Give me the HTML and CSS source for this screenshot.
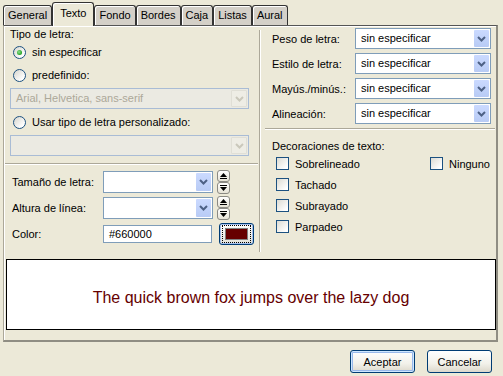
FILE: index.html
```html
<!DOCTYPE html>
<html>
<head>
  <link rel="stylesheet" href="styles.css">
  <title>Texto</title>
</head>
<body>
  <div class="dialog">
    <div class="tabs">
      <div class="tab">General</div>
      <div class="tab active">Texto</div>
      <div class="tab">Fondo</div>
      <div class="tab">Bordes</div>
      <div class="tab">Caja</div>
      <div class="tab">Listas</div>
      <div class="tab">Aural</div>
    </div>

    <div class="panel">
      <div class="cols">
        <div class="col-left">
          <div class="caption">Tipo de letra:</div>
          <div class="radio-row"><span class="radio checked"></span>sin especificar</div>
          <div class="radio-row spaced"><span class="radio"></span>predefinido:</div>
          <div class="select wide disabled">
            <span class="value">Arial, Helvetica, sans-serif</span>
            <span class="drop"><svg width="9" height="6" viewBox="0 0 9 6"><polyline points="1,1 4.5,4.5 8,1" /></svg></span>
          </div>
          <div class="radio-row"><span class="radio"></span>Usar tipo de letra personalizado:</div>
          <div class="select wide disabled">
            <span class="value"></span>
            <span class="drop"><svg width="9" height="6" viewBox="0 0 9 6"><polyline points="1,1 4.5,4.5 8,1" /></svg></span>
          </div>
          <div class="hsep left"></div>

          <div class="field-row first">
            <span class="field-label">Tamaño de letra:</span>
            <div class="select small">
              <span class="value"></span>
              <span class="drop"><svg width="9" height="6" viewBox="0 0 9 6"><polyline points="1,1 4.5,4.5 8,1" /></svg></span>
            </div>
            <div class="spinner">
              <span class="spin"><svg width="7" height="6" viewBox="0 0 7 6"><polygon points="3.5,0 7,4 0,4" /><rect x="0" y="5" width="7" height="1" /></svg></span>
              <span class="spin"><svg width="7" height="6" viewBox="0 0 7 6"><rect x="0" y="0" width="7" height="1" /><polygon points="0,2 7,2 3.5,6" /></svg></span>
            </div>
          </div>
          <div class="field-row">
            <span class="field-label">Altura de línea:</span>
            <div class="select small">
              <span class="value"></span>
              <span class="drop"><svg width="9" height="6" viewBox="0 0 9 6"><polyline points="1,1 4.5,4.5 8,1" /></svg></span>
            </div>
            <div class="spinner">
              <span class="spin"><svg width="7" height="6" viewBox="0 0 7 6"><polygon points="3.5,0 7,4 0,4" /><rect x="0" y="5" width="7" height="1" /></svg></span>
              <span class="spin"><svg width="7" height="6" viewBox="0 0 7 6"><rect x="0" y="0" width="7" height="1" /><polygon points="0,2 7,2 3.5,6" /></svg></span>
            </div>
          </div>
          <div class="field-row">
            <span class="field-label">Color:</span>
            <div class="text-input">#660000</div>
            <div class="color-btn"><span class="focus"><span class="swatch"></span></span></div>
          </div>
        </div>

        <div class="vsep"></div>

        <div class="col-right">
          <div class="prop-row">
            <span class="prop-label">Peso de letra:</span>
            <div class="select prop">
              <span class="value">sin especificar</span>
              <span class="drop"><svg width="9" height="6" viewBox="0 0 9 6"><polyline points="1,1 4.5,4.5 8,1" /></svg></span>
            </div>
          </div>
          <div class="prop-row">
            <span class="prop-label">Estilo de letra:</span>
            <div class="select prop">
              <span class="value">sin especificar</span>
              <span class="drop"><svg width="9" height="6" viewBox="0 0 9 6"><polyline points="1,1 4.5,4.5 8,1" /></svg></span>
            </div>
          </div>
          <div class="prop-row">
            <span class="prop-label">Mayús./minús.:</span>
            <div class="select prop">
              <span class="value">sin especificar</span>
              <span class="drop"><svg width="9" height="6" viewBox="0 0 9 6"><polyline points="1,1 4.5,4.5 8,1" /></svg></span>
            </div>
          </div>
          <div class="prop-row">
            <span class="prop-label">Alineación:</span>
            <div class="select prop">
              <span class="value">sin especificar</span>
              <span class="drop"><svg width="9" height="6" viewBox="0 0 9 6"><polyline points="1,1 4.5,4.5 8,1" /></svg></span>
            </div>
          </div>
          <div class="hsep right"></div>
          <div class="caption deco">Decoraciones de texto:</div>
          <div class="checks">
            <div class="check-row"><span class="checkbox"></span>Sobrelineado</div>
            <div class="check-row"><span class="checkbox"></span>Ninguno</div>
            <div class="check-row"><span class="checkbox"></span>Tachado</div>
            <div></div>
            <div class="check-row"><span class="checkbox"></span>Subrayado</div>
            <div></div>
            <div class="check-row"><span class="checkbox"></span>Parpadeo</div>
          </div>
        </div>
      </div>

      <div class="preview">The quick brown fox jumps over the lazy dog</div>
    </div>

    <div class="footer">
      <button class="btn default">Aceptar</button>
      <button class="btn">Cancelar</button>
    </div>
  </div>
</body>
</html>
```

FILE: styles.css
```css
html, body {
  margin: 0;
  background: #ece9d8;
}

body {
  font-family: "Liberation Sans", Arial, sans-serif;
  font-size: 11px;
  color: #000;
  width: 503px;
  height: 376px;
  overflow: hidden;
}

.dialog {
  padding: 0 5px 0 3px;
}

/* tabs */
.tabs {
  display: flex;
  align-items: flex-end;
  height: 25px;
  position: relative;
  z-index: 1;
}

.tab {
  height: 19px;
  line-height: 19px;
  padding: 0 4px;
  background: #d4d0c8;
  border: 1px solid #333;
  border-bottom: none;
  border-radius: 3px 3px 0 0;
  box-shadow: inset 1px 1px 0 #fff;
  font-size: 11px;
}

.tab.active {
  height: 23px;
  line-height: 20px;
  margin-bottom: -1px;
  background: #ece9d8;
  padding: 0 7px;
}

/* panel */
.panel {
  height: 314px;
  border-top: 1px solid #555;
  border-left: 1px solid #aca899;
  border-right: 2px solid #8f8d83;
  border-bottom: 2px solid #8f8d83;
  box-shadow: inset 1px 1px 0 #fff;
}

.cols {
  display: flex;
  height: 229px;
}

.col-left {
  width: 239px;
  flex-shrink: 0;
  padding: 0 10px 0 6px;
}

.vsep {
  width: 0;
  margin: 4px 0 3px;
  border-left: 1px solid #aca899;
  border-right: 1px solid #fff;
}

.col-right {
  flex: 1;
  padding: 2px 4px 0 11px;
}

.caption {
  height: 17px;
  line-height: 17px;
}

.caption.deco {
  margin-top: 8px;
}

.radio-row {
  display: flex;
  align-items: center;
  height: 18px;
  padding-left: 3px;
}

.radio-row + .select,
.select + .radio-row {
  margin-top: 4px;
}

.radio-row.spaced {
  margin-top: 5px;
}

.radio {
  width: 11px;
  height: 11px;
  border: 1px solid #1c5180;
  border-radius: 50%;
  background: linear-gradient(135deg, #d6d5cd, #fff 80%);
  margin-right: 6px;
  display: flex;
  align-items: center;
  justify-content: center;
}

.radio.checked::after {
  content: "";
  width: 5px;
  height: 5px;
  border-radius: 50%;
  background: radial-gradient(circle at 40% 40%, #8fe28f, #21a121 70%);
}

/* selects */
.select {
  display: flex;
  flex-shrink: 0;
  height: 19px;
  border: 1px solid #7f9db9;
  background: #fff;
}

.select .value {
  flex: 1;
  line-height: 19px;
  padding-left: 5px;
  white-space: nowrap;
  overflow: hidden;
}

.select .drop {
  width: 15px;
  margin: 1px;
  background: linear-gradient(#cbdaff, #b8cbf5);
  border-radius: 1px;
  display: flex;
  align-items: center;
  justify-content: center;
}

.select .drop polyline {
  fill: none;
  stroke: #4d6185;
  stroke-width: 2;
}

.select.disabled {
  border-color: #a9bcd5;
  background: #ebeae2;
}

.select.disabled .value {
  color: #aca899;
}

.select.disabled .drop {
  background: #eeede5;
  border: 1px solid #e0dfd6;
  width: 14px;
}

.select.disabled .drop polyline {
  stroke: #cac8bb;
}

.select.wide {
  width: 237px;
}

.select.small {
  width: 108px;
}

.select.prop {
  width: 134px;
}

.hsep {
  height: 0;
  border-top: 1px solid #aca899;
  border-bottom: 1px solid #fff;
}

.hsep.left {
  margin: 7px -9px 0 -5px;
}

.hsep.right {
  margin: 4px -3px 0 -7px;
}

/* left form rows */
.field-row {
  display: flex;
  align-items: center;
  height: 22px;
  margin-top: 4px;
}

.field-row.first {
  margin-top: 6px;
}

.field-label {
  width: 91px;
  flex-shrink: 0;
  padding-left: 2px;
}

.field-row .select {
  height: 20px;
}

.field-row .select .value {
  line-height: 20px;
}

.spinner {
  display: flex;
  flex-direction: column;
  flex-shrink: 0;
  margin-left: 4px;
}

.spin {
  width: 11px;
  height: 10px;
  border: 1px solid #8b8a84;
  border-radius: 3px;
  background: linear-gradient(#fff, #e6e3d6);
  display: flex;
  align-items: center;
  justify-content: center;
}

.spin svg {
  fill: #000;
}

.text-input {
  width: 102px;
  flex-shrink: 0;
  height: 16px;
  line-height: 16px;
  border: 1px solid #7f9db9;
  background: #fff;
  padding-left: 5px;
}

.color-btn {
  margin-left: 7px;
  flex-shrink: 0;
  width: 33px;
  height: 20px;
  border: 1px solid #003c74;
  border-radius: 3px;
  background: linear-gradient(#fff, #e3e1d7);
  box-shadow: inset 0 0 0 1px #a8c2ee;
  display: flex;
  align-items: center;
  justify-content: center;
}

.color-btn .focus {
  padding: 2px;
  border: 1px dotted #000;
}

.color-btn .swatch {
  display: block;
  width: 21px;
  height: 10px;
  background: #660000;
  border: 1px solid #808080;
}

/* right column */
.prop-row {
  display: flex;
  align-items: center;
  height: 21px;
  margin-bottom: 4px;
}

.prop-row:nth-child(4) {
  margin-bottom: 0;
}

.prop-label {
  width: 83px;
  flex-shrink: 0;
}

.checks {
  display: grid;
  grid-template-columns: 154px auto;
  row-gap: 4px;
  padding-left: 4px;
}

.check-row {
  display: flex;
  align-items: center;
  height: 17px;
}

.checkbox {
  width: 11px;
  height: 11px;
  border: 1px solid #1c5180;
  background: linear-gradient(135deg, #dcdbd3, #fff 85%);
  margin-right: 6px;
}

/* preview */
.preview {
  box-sizing: border-box;
  width: 490px;
  height: 71px;
  margin: 4px 0 0 2px;
  padding-top: 7px;
  border: 1px solid #000;
  background: #fff;
  color: #660000;
  font-size: 16px;
  display: flex;
  align-items: center;
  justify-content: center;
}

/* buttons */
.footer {
  display: flex;
  justify-content: flex-end;
  gap: 12px;
  padding: 8px 6px 0 0;
}

.btn {
  width: 65px;
  height: 23px;
  font-family: "Liberation Sans", Arial, sans-serif;
  font-size: 11px;
  color: #000;
  border: 1px solid #003c74;
  border-radius: 3px;
  background: linear-gradient(#fff, #f2f1ea 60%, #dcd8cb);
  padding: 0;
}

.btn.default {
  box-shadow: inset 0 0 0 1px #cee7ff, inset 0 0 0 2px #98b8ea;
}
```
